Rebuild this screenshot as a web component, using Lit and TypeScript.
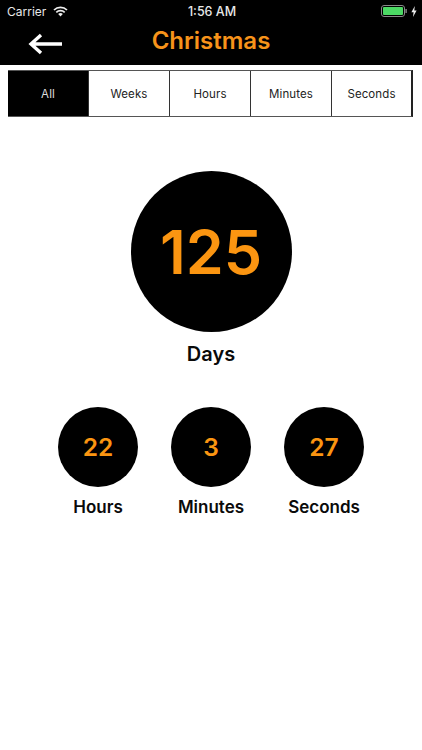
import { LitElement, html, css } from "lit";
import { customElement } from "lit/decorators.js";

@customElement("app-root")
export class AppRoot extends LitElement {
  static styles = css`
    :host {
      display: block;
      width: 422px;
      height: 750px;
      background: #fff;
      font-family: Inter, "Liberation Sans", sans-serif;
      color: #000;
      overflow: hidden;
    }
    .header {
      height: 65px;
      background: #000;
      display: flex;
      flex-direction: column;
    }
    .status {
      height: 22px;
      display: grid;
      grid-template-columns: 1fr auto 1fr;
      align-items: center;
      color: #e8e8e8;
      font-size: 12px;
      padding: 0 5px 0 7px;
    }
    .status-left {
      display: flex;
      align-items: center;
      gap: 7px;
    }
    .status-right {
      display: flex;
      justify-content: flex-end;
      align-items: center;
      gap: 4px;
    }
    .time { font-size: 12.5px; font-weight: 500; }
    .nav {
      flex: 1;
      display: grid;
      grid-template-columns: 1fr auto 1fr;
      align-items: center;
    }
    .back { padding-left: 28px; display: flex; margin-top: 1px; }
    .title {
      color: #f7931a;
      font-size: 24px;
      font-weight: 600;
      line-height: 30px;
      margin-bottom: 6px;
    }
    .tabs {
      margin: 5px 0 0 8px;
      width: 405px;
      height: 47px;
      box-sizing: border-box;
      border: 1px solid #555;
      border-left: 0;
      border-right: 2px solid #222;
      display: grid;
      grid-template-columns: 80px 81px 81px 81px 1fr;
    }
    .tab {
      display: flex;
      align-items: center;
      justify-content: center;
      font-size: 11.5px;
      letter-spacing: 0.1px;
      color: #222;
      border-left: 1px solid #333;
    }
    .tab.on {
      background: #000;
      color: #ddd;
      border-left: 0;
    }
    .big {
      margin-top: 54px;
      display: flex;
      flex-direction: column;
      align-items: center;
    }
    .circle {
      border-radius: 50%;
      background: #000;
      color: #fb9511;
      display: flex;
      align-items: center;
      justify-content: center;
    }
    .c-big {
      width: 161px;
      height: 161px;
      font-size: 61px;
      font-weight: 600;
    }
    .c-small {
      width: 80px;
      height: 80px;
      font-size: 24.5px;
      font-weight: 600;
    }
    .label {
      font-size: 17px;
      font-weight: 600;
      line-height: 22px;
      margin-top: 9px;
      color: #0a0a0a;
    }
    .big .label {
      font-size: 20px;
      line-height: 24px;
      margin-top: 10px;
    }
    .row {
      margin-top: 41px;
      display: flex;
      justify-content: center;
      gap: 33px;
    }
    .item {
      display: flex;
      flex-direction: column;
      align-items: center;
      width: 80px;
    }
    .item .label { white-space: nowrap; }
  `;

  render() {
    const tabs = ["All", "Weeks", "Hours", "Minutes", "Seconds"];
    const items = [
      ["22", "Hours"],
      ["3", "Minutes"],
      ["27", "Seconds"],
    ];
    return html`
      <div class="header">
        <div class="status">
          <div class="status-left">
            <span>Carrier</span>
            <svg width="15" height="11" viewBox="0 0 15 11">
              <path d="M1 4 A9.2 9.2 0 0 1 14 4" fill="none" stroke="#eee" stroke-width="1.7"/>
              <path d="M3.3 6.3 A6 6 0 0 1 11.7 6.3" fill="none" stroke="#eee" stroke-width="1.7"/>
              <path d="M5.2 8 A3 3 0 0 1 9.8 8 L7.5 10.5 Z" fill="#eee"/>
            </svg>
          </div>
          <span class="time">1:56 AM</span>
          <div class="status-right">
            <svg width="26" height="12" viewBox="0 0 26 12">
              <rect x="0.5" y="0.5" width="23" height="11" rx="2.5" fill="none" stroke="#888"/>
              <rect x="2" y="2" width="20" height="8" rx="1" fill="#4cd964"/>
              <rect x="24.4" y="4" width="1.4" height="4" fill="#888"/>
            </svg>
            <svg width="6" height="11" viewBox="0 0 6 11">
              <path d="M3.8 0 L0.4 6.2 H2.6 L2 11 L5.6 4.4 H3.3 Z" fill="#eee"/>
            </svg>
          </div>
        </div>
        <div class="nav">
          <div class="back">
            <svg width="35" height="22" viewBox="0 0 35 22">
              <path d="M34 11 H4 M13 2 L3 11 L13 20" fill="none" stroke="#fff" stroke-width="3.4"/>
            </svg>
          </div>
          <div class="title">Christmas</div>
          <div></div>
        </div>
      </div>
      <div class="tabs">
        ${tabs.map(
          (t, i) => html`<div class="tab ${i === 0 ? "on" : ""}">${t}</div>`
        )}
      </div>
      <div class="big">
        <div class="circle c-big">125</div>
        <div class="label">Days</div>
      </div>
      <div class="row">
        ${items.map(
          ([n, l]) => html`
            <div class="item">
              <div class="circle c-small">${n}</div>
              <div class="label">${l}</div>
            </div>
          `
        )}
      </div>
    `;
  }
}
